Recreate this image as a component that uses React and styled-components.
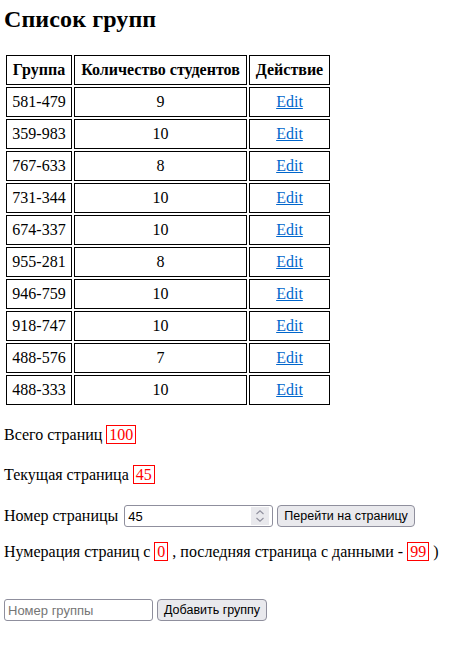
import React from "react";
import styled, { createGlobalStyle } from "styled-components";

const Global = createGlobalStyle`
  html, body { margin: 0; padding: 0; background: #fff; }
  body { font-family: "Liberation Serif", "Times New Roman", serif; font-size: 16px; color: #000; }
`;

const Page = styled.div`
  padding: 5px 4px;
  display: flex;
  flex-direction: column;
  align-items: flex-start;
`;

const Title = styled.h2`
  margin: 0 0 20px;
  font-size: 24px;
  line-height: 28px;
  font-weight: bold;
  letter-spacing: 0.1px;
`;

const Table = styled.table`
  border-collapse: separate;
  border-spacing: 2px;
`;

const Th = styled.th`
  border: 1px solid #000;
  padding: 5px;
  width: ${(p) => p.$w}px;
  line-height: 18px;
  font-weight: bold;
  text-align: center;
  white-space: nowrap;
`;

const Td = styled.td`
  border: 1px solid #000;
  padding: 5px;
  line-height: 18px;
  text-align: center;
  white-space: nowrap;
`;

const EditLink = styled.a`
  color: #0066cc;
  text-decoration: underline;
`;

const Line = styled.div`
  margin-top: ${(p) => p.$gap}px;
  line-height: 20px;
  white-space: nowrap;
`;

const ControlLine = styled.div`
  margin-top: ${(p) => p.$gap}px;
  display: flex;
  align-items: center;
  gap: 4px;
  height: 22px;
  line-height: 20px;
  white-space: nowrap;
`;

const Label = styled.span`
  margin-right: 2px;
`;

const Value = styled.span`
  border: 1px solid #ff0000;
  color: #ff0000;
  padding: 0 2px;
`;

const FieldBox = styled.div`
  box-sizing: border-box;
  width: 149px;
  height: 22px;
  border: 1px solid #8f8f9d;
  border-radius: 3px;
  background: #fff;
  display: flex;
  align-items: center;
  padding: 0 3px 0 3px;
`;

const FieldInput = styled.input`
  flex: 1;
  min-width: 0;
  border: none;
  outline: none;
  padding: 0;
  margin: 0;
  background: transparent;
  font-family: "Liberation Sans", Arial, sans-serif;
  font-size: 13px;
  color: #000;
  &::placeholder {
    color: #757575;
    opacity: 1;
  }
`;

const Spin = styled.div`
  width: 18px;
  height: 18px;
  background: #e9e9ed;
  display: flex;
  align-items: center;
  justify-content: center;
`;

const Button = styled.button`
  box-sizing: border-box;
  height: 22px;
  margin: 0;
  padding: 0 6px;
  border: 1px solid #8f8f9d;
  border-radius: 4px;
  background: #e9e9ed;
  font-family: "Liberation Sans", Arial, sans-serif;
  font-size: 12.5px;
  color: #000;
  line-height: 18px;
`;

const rows = [
  ["581-479", 9],
  ["359-983", 10],
  ["767-633", 8],
  ["731-344", 10],
  ["674-337", 10],
  ["955-281", 8],
  ["946-759", 10],
  ["918-747", 10],
  ["488-576", 7],
  ["488-333", 10],
];

function SpinIcon() {
  return (
    <svg width="10" height="14" viewBox="0 0 10 14" fill="none" stroke="#8f8f9d" strokeWidth="1.1">
      <path d="M1.5 5 L5 1.8 L8.5 5" />
      <path d="M1.5 9 L5 12.2 L8.5 9" />
    </svg>
  );
}

export default function App() {
  return (
    <>
      <Global />
      <Page>
        <Title>Список групп</Title>
        <Table>
          <thead>
            <tr>
              <Th $w={54}>Группа</Th>
              <Th $w={161}>Количество студентов</Th>
              <Th $w={69}>Действие</Th>
            </tr>
          </thead>
          <tbody>
            {rows.map(([g, n]) => (
              <tr key={g}>
                <Td>{g}</Td>
                <Td>{n}</Td>
                <Td>
                  <EditLink href="#">Edit</EditLink>
                </Td>
              </tr>
            ))}
          </tbody>
        </Table>
        <Line $gap={18}>
          Всего страниц <Value>100</Value>
        </Line>
        <Line $gap={20}>
          Текущая страница <Value>45</Value>
        </Line>
        <ControlLine $gap={20}>
          <Label>Номер страницы</Label>
          <FieldBox>
            <FieldInput defaultValue="45" />
            <Spin>
              <SpinIcon />
            </Spin>
          </FieldBox>
          <Button>Перейти на страницу</Button>
        </ControlLine>
        <Line $gap={15}>
          Нумерация страниц с <Value>0</Value> , последняя страница с данными - <Value>99</Value> )
        </Line>
        <ControlLine $gap={37}>
          <FieldBox>
            <FieldInput placeholder="Номер группы" />
          </FieldBox>
          <Button>Добавить группу</Button>
        </ControlLine>
      </Page>
    </>
  );
}
